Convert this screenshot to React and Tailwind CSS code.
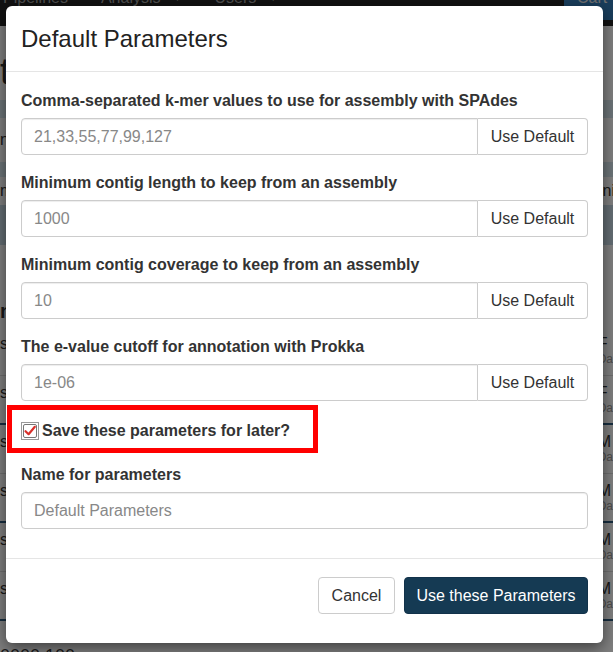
import React from "react";

function Field({ label, value }) {
  return (
    <div className="mb-[17px]">
      <div className="h-[22px] leading-[22px] text-[16px] font-bold text-[#333] mb-[6px]">{label}</div>
      <div className="flex h-[37px]">
        <div className="flex-1 flex items-center px-[12px] border border-[#ccc] rounded-l-[4px] text-[16px] text-[#888] shadow-[inset_0_1px_1px_rgba(0,0,0,0.075)]">
          {value}
        </div>
        <div className="w-[110px] flex items-center justify-center border border-l-0 border-[#ccc] rounded-r-[4px] bg-white text-[16px] text-[#333]">
          Use Default
        </div>
      </div>
    </div>
  );
}

function BgRow({ left, right, sub, line }) {
  return (
    <div className={`h-[49px] flex items-start pt-[9px] ${line ? "border-b-2 border-[#2f5d80]" : "border-b border-[#ddd]"}`}>
      <div className="w-[606px] text-[16px] leading-[16px] text-[#333]">{left}</div>
      <div className="flex flex-col">
        <div className="text-[16px] leading-[16px] text-[#333]">{right}</div>
        <div className="text-[12px] leading-[14px] text-[#999]">{sub}</div>
      </div>
    </div>
  );
}

export default function App() {
  return (
    <div className="relative w-[613px] h-[652px] overflow-hidden bg-white font-['Liberation_Sans',Arial,sans-serif]">
      {/* background page */}
      <div className="flex flex-col">
        <nav className="h-[26px] bg-[#222] flex items-start overflow-hidden">
          <div className="-mt-[12px] flex items-center text-[16px] leading-[20px] text-[#9d9d9d]">
            <span className="ml-[3px]">Pipelines</span>
            <span className="ml-[33px]">Analysis</span>
            <span className="ml-[12px] text-[10px]">▼</span>
            <span className="ml-[32px]">Users</span>
            <span className="ml-[12px] text-[10px]">▼</span>
          </div>
          <div className="ml-auto h-[20px] w-[49px] bg-[#337ab7] rounded-bl-[4px] overflow-hidden">
            <div className="-mt-[12px] pl-[13px] text-[16px] leading-[20px] text-[#ddd]">Cart</div>
          </div>
        </nav>
        <div className="h-[29px]" />
        <div className="h-[33px] text-[36px] leading-[33px] text-[#333]">t</div>
        <div className="h-[12px]" />
        <div className="h-[18px] bg-[#d9e8f0]" />
        <div className="h-[44px] flex items-center text-[16px] text-[#333]">nc</div>
        <div className="h-[15px] bg-[#d9e8f0]" />
        <div className="h-[28px] flex items-center justify-between text-[16px] text-[#333]">
          <span>m</span>
          <span className="mr-[-2px]">ni</span>
        </div>
        <div className="h-[40px] bg-[#c9dbe6]" />
        <div className="h-[52px]" />
        <div className="h-[28px] text-[20px] font-bold leading-[28px] text-[#333]">np</div>
        <div className="h-[2px]" />
        <BgRow left="s" right="F" sub="Da" />
        <BgRow left="s" right="F" sub="Da" line />
        <BgRow left="s" right="M" sub="Da" />
        <BgRow left="s" right="M" sub="Da" line />
        <BgRow left="s" right="M" sub="Da" />
        <BgRow left="s" right="M" sub="Da" line />
        <div className="pt-[25px] text-[18px] leading-[20px] text-[#333]">0000 100</div>
      </div>

      {/* backdrop */}
      <div className="absolute inset-0 bg-black/50" />

      {/* modal */}
      <div className="absolute left-[6px] top-[6px] w-[597px] bg-white rounded-[6px] shadow-[0_5px_15px_rgba(0,0,0,0.5)] flex flex-col">
        <div className="h-[66px] flex items-center px-[15px] border-b border-[#e5e5e5]">
          <h4 className="text-[24px] leading-[26px] text-[#222] font-normal">Default Parameters</h4>
        </div>
        <div className="px-[15px] pt-[18px] pb-[12px]">
          <Field label="Comma-separated k-mer values to use for assembly with SPAdes" value="21,33,55,77,99,127" />
          <Field label="Minimum contig length to keep from an assembly" value="1000" />
          <Field label="Minimum contig coverage to keep from an assembly" value="10" />
          <Field label="The e-value cutoff for annotation with Prokka" value="1e-06" />
          <div className="h-[26px] flex items-center mb-[20px]">
            <svg width="18" height="18" viewBox="0 0 18 18" className="shrink-0">
              <rect x="0.5" y="0.5" width="17" height="17" fill="none" stroke="#333" strokeWidth="1" strokeDasharray="1 1" />
              <rect x="2.5" y="2.5" width="13" height="13" rx="1.5" fill="#fff" stroke="#777" strokeWidth="1" />
              <path d="M4.5 9.2 L7.6 12.2 L13.8 4.8" fill="none" stroke="#d9312b" strokeWidth="2.2" strokeLinecap="round" strokeLinejoin="round" />
            </svg>
            <span className="ml-[3px] text-[16px] font-bold text-[#333]">Save these parameters for later?</span>
          </div>
          <div className="mb-[17px]">
            <div className="h-[22px] leading-[22px] text-[16px] font-bold text-[#333] mb-[6px]">Name for parameters</div>
            <div className="h-[37px] flex items-center px-[12px] border border-[#ccc] rounded-[4px] text-[16px] text-[#888] shadow-[inset_0_1px_1px_rgba(0,0,0,0.075)]">
              Default Parameters
            </div>
          </div>
        </div>
        <div className="border-t border-[#e5e5e5] px-[15px] pt-[18px] pb-[29px] flex justify-end gap-[9px]">
          <button className="h-[37px] w-[77px] border border-[#ccc] rounded-[4px] bg-white text-[16px] text-[#333]">Cancel</button>
          <button className="h-[37px] w-[184px] border border-[#12324a] rounded-[4px] bg-[#153a53] text-[16px] text-white">Use these Parameters</button>
        </div>
      </div>

      {/* annotation highlight */}
      <div className="absolute left-[7px] top-[405px] w-[311px] h-[48px] border-[5px] border-[#ff0000]" />
    </div>
  );
}
